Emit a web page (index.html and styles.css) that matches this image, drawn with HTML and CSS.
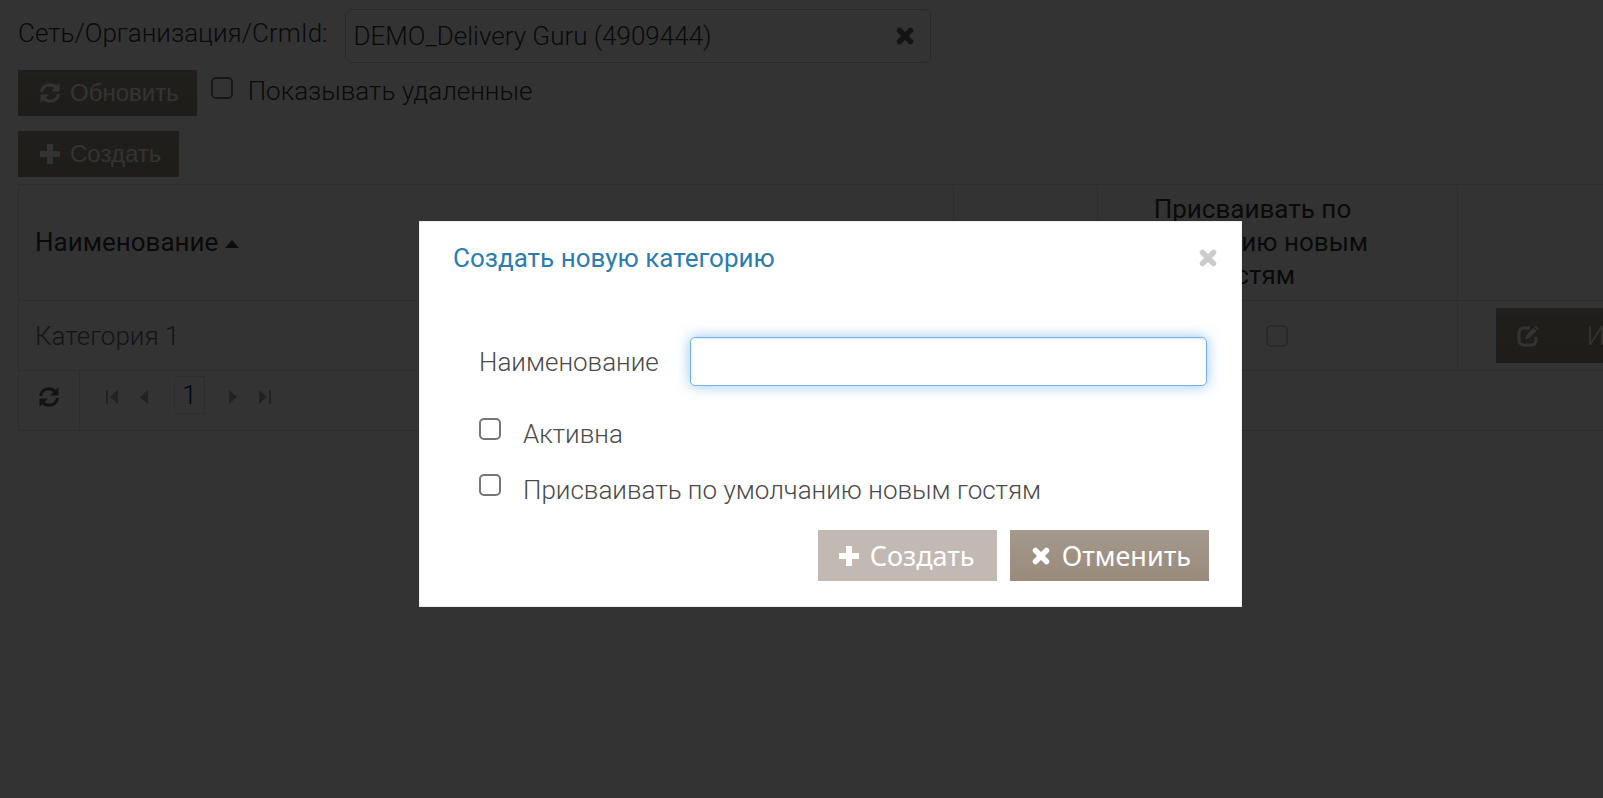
FILE: index.html
```html
<!DOCTYPE html>
<html lang="ru">
<head>
<meta charset="utf-8">
<title>Категории гостей</title>
<link rel="stylesheet" href="styles.css">
</head>
<body>
<svg class="sprite" aria-hidden="true">
  <symbol id="i-refresh" viewBox="0 0 22 22">
    <path d="M2.500 10C3 5.500 6.500 2.800 11 2.800c2.500 0 4.700 1 6 2.600M19.500 12c-.5 4.500-4 7.200-8.500 7.200-2.500 0-4.700-1-6-2.600" fill="none" stroke="currentColor" stroke-width="3.200"/>
    <path d="M20.500 1v8.500H12zM1.500 21v-8.500H10z" fill="currentColor"/>
  </symbol>
  <symbol id="i-plus" viewBox="0 0 22 22">
    <path d="M8 1h6v7h7v6h-7v7H8v-7H1V8h7z" fill="currentColor"/>
  </symbol>
  <symbol id="i-cross" viewBox="0 0 22 22">
    <path d="M5.500 5.500l11 11M16.500 5.500l-11 11" fill="none" stroke="currentColor" stroke-width="5.500" stroke-linecap="round"/>
  </symbol>
  <symbol id="i-edit" viewBox="0 0 22 22">
    <path d="M13 3H6.500A4.500 4.500 0 0 0 2 7.500v8A4.500 4.500 0 0 0 6.500 20h8a4.500 4.500 0 0 0 4.500-4.500V12" fill="none" stroke="currentColor" stroke-width="3"/>
    <path d="M8 14.500l1.500-4.500 7-7 3 3-7 7zM17.500 2l1.500-1.500 3 3L20.500 5z" fill="currentColor"/>
  </symbol>
  <symbol id="i-prev" viewBox="0 0 12 16"><path d="M10 1v14L2 8z" fill="currentColor"/></symbol>
  <symbol id="i-next" viewBox="0 0 12 16"><path d="M2 1v14l8-7z" fill="currentColor"/></symbol>
  <symbol id="i-first" viewBox="0 0 12 16"><path d="M12 1v14L4 8zM0 1h2v14H0z" fill="currentColor"/></symbol>
  <symbol id="i-last" viewBox="0 0 12 16"><path d="M0 1v14l8-7zM10 1h2v14h-2z" fill="currentColor"/></symbol>
</svg>

<main class="page">
  <div class="filter">
    <label class="filter-label" for="org">Сеть/Организация/CrmId:</label>
    <div class="combo">
      <input id="org" class="combo-input" type="text" value="DEMO_Delivery Guru (4909444)">
      <button class="icon-btn" type="button" aria-label="Очистить"><svg class="icon"><use href="#i-cross"/></svg></button>
    </div>
  </div>
  <div class="toolbar">
    <button class="btn" type="button"><svg class="icon"><use href="#i-refresh"/></svg>Обновить</button>
    <input id="deleted" class="check" type="checkbox">
    <label class="check-label" for="deleted">Показывать удаленные</label>
  </div>
  <div class="toolbar">
    <button class="btn" type="button"><svg class="icon"><use href="#i-plus"/></svg>Создать</button>
  </div>

  <div class="grid">
    <table class="table">
      <colgroup><col class="col-name"><col class="col-active"><col class="col-default"><col></colgroup>
      <thead>
        <tr><th class="left">Наименование<span class="sort"></span></th><th></th><th>Присваивать по умолчанию новым гостям</th><th></th></tr>
      </thead>
      <tbody>
        <tr>
          <td>Категория 1</td>
          <td></td>
          <td class="center"><input class="check" type="checkbox" aria-label="Присваивать по умолчанию" disabled></td>
          <td class="actions"><button class="btn btn-edit" type="button"><svg class="icon"><use href="#i-edit"/></svg>Изменить</button></td>
        </tr>
      </tbody>
    </table>
    <div class="pager">
      <div class="pager-refresh"><button class="icon-btn" type="button" aria-label="Обновить таблицу"><svg class="icon"><use href="#i-refresh"/></svg></button></div>
      <nav class="pager-nav" aria-label="Страницы">
        <button class="icon-btn page-btn" type="button" aria-label="Первая"><svg class="arrow"><use href="#i-first"/></svg></button>
        <button class="icon-btn page-btn" type="button" aria-label="Предыдущая"><svg class="arrow"><use href="#i-prev"/></svg></button>
        <a class="page-current" href="#">1</a>
        <button class="icon-btn page-btn" type="button" aria-label="Следующая"><svg class="arrow"><use href="#i-next"/></svg></button>
        <button class="icon-btn page-btn" type="button" aria-label="Последняя"><svg class="arrow"><use href="#i-last"/></svg></button>
      </nav>
    </div>
  </div>
</main>

<div class="overlay">
  <form class="modal" role="dialog" aria-labelledby="modal-title">
    <header class="modal-head">
      <h1 class="modal-title" id="modal-title">Создать новую категорию</h1>
      <button class="icon-btn modal-close" type="button" aria-label="Закрыть"><svg class="icon"><use href="#i-cross"/></svg></button>
    </header>
    <div class="modal-body">
      <div class="field">
        <label for="name">Наименование</label>
        <input id="name" class="field-input" type="text">
      </div>
      <div class="option">
        <input id="active" class="check" type="checkbox">
        <label for="active">Активна</label>
      </div>
      <div class="option">
        <input id="default" class="check" type="checkbox">
        <label for="default">Присваивать по умолчанию новым гостям</label>
      </div>
    </div>
    <footer class="modal-foot">
      <button class="btn btn-modal" type="submit" disabled><svg class="icon"><use href="#i-plus"/></svg>Создать</button>
      <button class="btn btn-modal" type="button"><svg class="icon"><use href="#i-cross"/></svg>Отменить</button>
    </footer>
  </form>
</div>
</body>
</html>
```
FILE: styles.css
```css
* { box-sizing: border-box; }

body {
  margin: 0;
  background: #fff;
  color: #4a4a4a;
  font: 300 26px/32px Roboto, "Noto Sans", sans-serif;
  overflow: hidden;
}

input, button { font: inherit; color: inherit; }

.sprite { display: none; }
.icon { display: block; flex: none; width: 22px; height: 22px; }

.page { padding: 9px 0 0 18px; color: #333; }

.filter { display: flex; gap: 17px; margin-bottom: 7px; }
.filter-label { padding-top: 8px; }

.combo {
  display: flex;
  align-items: center;
  flex: 0 0 37%;
  height: 54px;
  padding: 0 14px 0 8px;
  border: 1px solid #ccc;
  border-radius: 6px;
}
.combo-input { flex: 1; min-width: 0; padding: 0; border: 0; outline: 0; background: none; }

.icon-btn { display: flex; padding: 0; border: 0; background: none; color: #666; }

.toolbar { display: flex; margin-bottom: 15px; }
.toolbar + .toolbar { margin-bottom: 7px; }
.toolbar .check { margin: 7px 15px 0 14px; }
.check-label { padding-top: 5px; }

.btn {
  display: flex;
  align-items: center;
  gap: 9px;
  height: 46px;
  padding: 0 18px 0 21px;
  border: 0;
  background: linear-gradient(#a4998d, #998a7b);
  color: #fff;
  font: 400 24px/32px "Liberation Sans", Arial, sans-serif;
}

.check {
  appearance: none;
  flex: none;
  width: 22px;
  height: 22px;
  margin: 0;
  border: 2px solid #767676;
  border-radius: 5px;
  background: #fff;
}
.check:disabled { border-color: #ccc; }

.grid { border: solid #e0e0e0; border-width: 1px 0 1px 1px; overflow: hidden; }

.table { width: 100%; table-layout: fixed; border-collapse: collapse; }
.col-name { width: 59%; }
.col-active { width: 9.1%; }
.col-default { width: 22.7%; }

.table th, .table td {
  border-bottom: 1px solid #e0e0e0;
  text-align: left;
  vertical-align: middle;
}
.table th + th, .table td + td { border-left: 1px solid #e0e0e0; }
.table th { padding: 8px 66px 8px 16px; line-height: 33px; font-weight: 400; text-align: center; }
.table th.left { padding: 8px 16px; text-align: left; }
.table td { height: 70px; padding: 7px 16px; color: #666; }
.table td.center .check { display: block; margin: 0 auto; }
.table td.actions { padding-left: 38px; }

.sort {
  display: inline-block;
  margin-left: 7px;
  border: solid transparent;
  border-width: 0 7px 8px;
  border-bottom-color: #444;
  vertical-align: 3px;
}

.btn-edit {
  gap: 48px;
  height: 55px;
  font: 300 26px/32px Roboto, sans-serif;
}

.pager { display: flex; height: 59px; }
.pager-refresh { display: flex; align-items: flex-start; width: 61px; padding: 15px 0 0 19px; border-right: 1px solid #e0e0e0; }
.pager-nav { display: flex; padding: 5px 0 0 26px; }
.page-btn { width: 32px; height: 42px; align-items: center; color: #aaa; }
.arrow { width: 12px; height: 16px; }
.page-current {
  width: 31px;
  height: 38px;
  margin: 0 22px 0 4px;
  border: 1px solid #d8e0e6;
  color: #024;
  line-height: 36px;
  text-align: center;
  text-decoration: none;
}

/* The dialog sits slightly right of and below the window's centre. */
.overlay {
  position: fixed;
  inset: 0;
  display: flex;
  align-items: center;
  justify-content: center;
  padding: 30px 0 0 58px;
  background: rgba(0, 0, 0, 0.8);
}

.modal {
  width: 823px;
  max-width: 100%;
  border: 1px solid #eee;
  background: #fff;
}

.modal-head {
  display: flex;
  align-items: center;
  justify-content: space-between;
  padding: 20px 22px 32px 33px;
}
.modal-title { margin: 0; color: #2c7cb0; font-size: 26px; font-weight: 400; line-height: 32px; }
.modal-close { color: #ccc; }

.modal-body { padding: 31px 34px 0 59px; }

.field { display: flex; align-items: center; gap: 31px; margin-bottom: 32px; }
.field-input {
  flex: 1;
  min-width: 0;
  height: 49px;
  padding: 0 8px;
  border: 1px solid #6eb5ef;
  border-radius: 5px;
  outline: 0;
  box-shadow: inset 0 1px 2px rgba(0, 0, 0, 0.1), 0 0 14px rgba(102, 175, 233, 0.7);
}

.option { display: flex; gap: 22px; margin-bottom: 24px; }

.modal-foot { display: flex; justify-content: flex-end; gap: 13px; padding: 0 32px 25px; }
.btn-modal { gap: 10px; min-width: 179px; height: 51px; padding: 0 18px 0 20px; font: 400 27px/32px "Noto Sans", Tahoma, sans-serif; }
.btn-modal:disabled { background: #c3b9b3; }
```
